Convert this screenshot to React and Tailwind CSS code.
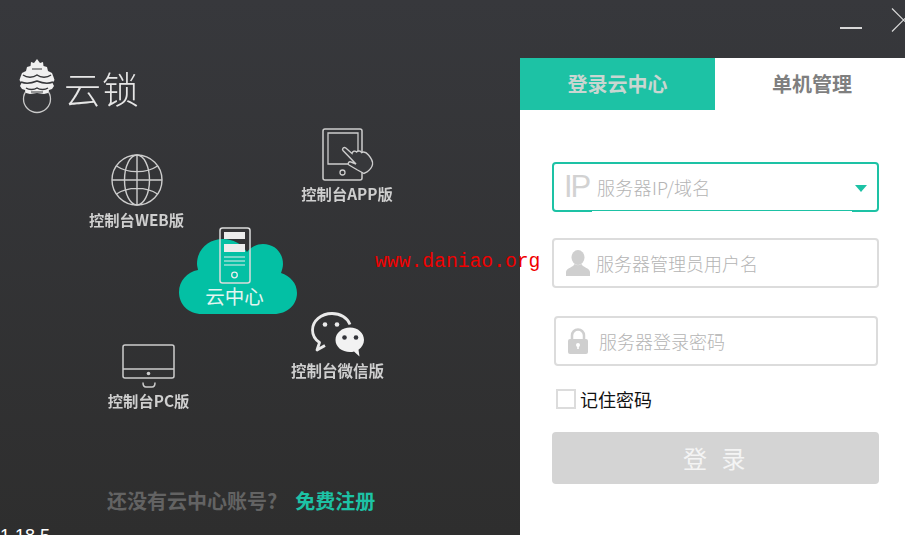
import React from "react";

// Libellé sous chaque icône du canevas
function Node({ className, label, labelClass, children }) {
  return (
    <div className={`absolute flex flex-col items-center ${className}`}>
      {children}
      <span className={`whitespace-nowrap font-bold text-[#cfcfcf] blur-[0.3px] ${labelClass}`}>{label}</span>
    </div>
  );
}

function Mascot() {
  return (
    <svg width="36" height="56" viewBox="0 0 36 56" className="shrink-0">
      <circle cx="18" cy="40" r="13.500" fill="none" stroke="#c9c9c9" strokeWidth="1.300" />
      <polygon
        points="18,0 21,4 24,3 24.500,7 28,8 29,12 33,14 34.500,18 35.500,21 33.500,24 35,27 33,30 30,31 29,34 25,35 18,34 11,35 7,34 6,31 3,30 1,27 2.500,24 0.500,21 1.500,18 3,14 7,12 8,8 11.500,7 12,3 15,4"
        fill="#f0f0f0"
      />
      <path d="M4 16c4 3 10 3 14 0 4 3 10 3 14 0M2 23c5 2 11 1 16-1 5 2 11 3 16 1M7 29c3 2 8 2 11 0 3 2 8 2 11 0" fill="none" stroke="#37383b" strokeWidth="1.500" />
      <path d="M13 10h10M12 33h12" fill="none" stroke="#37383b" strokeWidth="1.100" />
    </svg>
  );
}

function Globe() {
  return (
    <svg width="54" height="54" viewBox="0 0 54 54" fill="none" stroke="#cdcdcd" strokeWidth="1.400" className="blur-[0.2px]">
      <circle cx="27" cy="27" r="25" />
      <ellipse cx="27" cy="27" rx="12.500" ry="25" />
      <path d="M27 2v50M2 27h50M6.500 13c11 7.500 30 7.500 41 0M6.500 41c11-7.500 30-7.500 41 0" />
    </svg>
  );
}

function Tablet() {
  return (
    <svg width="54" height="54" viewBox="0 0 54 54" fill="none" stroke="#cdcdcd" className="blur-[0.2px]">
      <path d="M40 41v9a2 2 0 0 1-2 2H3a2 2 0 0 1-2-2V3a2 2 0 0 1 2-2h35a2 2 0 0 1 2 2v22" strokeWidth="1.500" />
      <path d="M27 36H6V5h30v18" strokeWidth="1.300" />
      <circle cx="20.500" cy="44.500" r="2.500" strokeWidth="1.300" />
      <path
        d="M21 22.500c-1.500-2 1-4 2.800-2.500l6.200 5.500c.5-2.500 3-3 4.500-1.500 1.500-1.500 4-1.500 5 .5 2-1 5 0 7 2.500 3 3.500 4.500 7 4 9.500-.5 3-3 5.500-5.500 7.500l-3 1.500-6.500-3.500-8.500-5c-2-1.500 0-4 2-3l5 2z"
        fill="#37383b"
        strokeWidth="1.400"
      />
    </svg>
  );
}

function Monitor() {
  return (
    <svg width="54" height="46" viewBox="0 0 54 46" fill="none" stroke="#cdcdcd" strokeWidth="1.500" className="blur-[0.2px]">
      <rect x="1" y="1" width="51" height="33" rx="2" />
      <path d="M1 25h51M21 38.500c0 3 1 4.500 3 4.500h6c2 0 3-1.500 3-4.500" />
      <circle cx="26.500" cy="29.500" r="1.800" fill="#cdcdcd" stroke="none" />
    </svg>
  );
}

function Wechat() {
  return (
    <svg width="54" height="46" viewBox="0 0 54 46" className="blur-[0.2px]">
      <path
        d="M21 1.500C10 1.500 1.500 9 1.500 18c0 5 2.500 9.500 7 12.500L6 38l8-4.500"
        fill="none"
        stroke="#eaeaea"
        strokeWidth="2.800"
        strokeLinejoin="round"
      />
      <path d="M21 1.500c8.500 0 15.500 4.500 18 11" fill="none" stroke="#eaeaea" strokeWidth="2.800" />
      <circle cx="14" cy="12.500" r="2.300" fill="#eaeaea" />
      <circle cx="26" cy="12.500" r="2.300" fill="#eaeaea" />
      <path d="M39 15.500c-8 0-14.500 5.500-14.500 12.500S31 40 39 40c1.500 0 3-.2 4-.6l5.500 5-1-6.700c3.500-2.300 5.500-6 5.500-9.700 0-7-6-12.500-14-12.500z" fill="#f2f2f2" />
      <circle cx="33.500" cy="25.500" r="2.300" fill="#33343a" />
      <circle cx="45" cy="25.500" r="2.300" fill="#33343a" />
    </svg>
  );
}

function CloudCenter() {
  return (
    <div className="absolute left-[179px] top-[107px] h-[88px] w-[118px]">
      <svg width="118" height="76" viewBox="0 0 118 76" className="absolute left-0 top-[12px]">
        <path
          d="M23 75C9 75 0 65 0 53c0-11 8-20 19-22 0-1-1-4-1-6C18 10 30 0 44 0c10 0 19 5 24 13 4-5 10-8 16-8 12 0 20 9 20 20 0 3-1 6-2 9 9 3 16 10 16 20 0 12-10 21-23 21z"
          fill="#03c0a4"
        />
      </svg>
      <svg width="32" height="58" viewBox="0 0 32 58" fill="none" className="absolute left-[40px] top-0">
        <rect x="1" y="1" width="30" height="55" rx="2.500" stroke="#dcdcdc" strokeWidth="1.500" />
        <rect x="5" y="5" width="21" height="7" fill="#ececec" />
        <rect x="5" y="17" width="21" height="8" fill="#ececec" />
        <path d="M5 30h21M5 34h21M5 38h21" stroke="#ececec" strokeWidth="1.200" />
        <circle cx="15.500" cy="48" r="2.800" stroke="#ececec" strokeWidth="1.300" />
      </svg>
      <span className="absolute left-0 right-[7px] top-[56px] text-center text-[19.500px] leading-[26px] text-[#e4f5f1]">云中心</span>
    </div>
  );
}

function Field({ className = "", active, icon, text, textClass = "" }) {
  return (
    <div
      className={`relative flex h-[50px] items-center rounded-[4px] border-2 ${active ? "border-[#1dc2a5]" : "border-[#dcdcdc]"} ${className}`}
    >
      {icon}
      <span className={`text-[18px] font-light leading-6 text-[#b4b4b4] ${textClass}`}>{text}</span>
      {active && (
        <>
          <span className="absolute -bottom-[2px] left-[38px] h-px w-[260px] bg-white" />
          <span className="absolute right-[10px] top-[21px] h-0 w-0 border-x-[6px] border-t-[7px] border-x-transparent border-t-[#1dc2a5]" />
        </>
      )}
    </div>
  );
}

export default function App() {
  return (
    <div className="relative flex h-[535px] w-[905px] flex-col overflow-hidden bg-gradient-to-b from-[#37383c] to-[#2e2e2e] [font-family:'Noto_Sans_CJK_SC','Liberation_Sans',sans-serif]">
      <header className="flex h-[58px] shrink-0 justify-end">
        <div className="mr-[29px] mt-[27px] h-[2px] w-[22px] bg-[#d8d8d8]" />
        <svg width="24" height="24" viewBox="0 0 24 24" className="-mr-[10px] mt-[8px]" fill="none" stroke="#d8d8d8" strokeWidth="1.200">
          <path d="M1 0.500l23 23M1 23.500l23-23" />
        </svg>
      </header>

      <div className="flex min-h-0 flex-1">
        <div className="flex w-[520px] shrink-0 flex-col">
          <div className="flex h-[62px] shrink-0 items-start pl-[19px] pt-[1px]">
            <Mascot />
            <span className="ml-[9px] mt-[4px] text-[37px] font-extralight leading-[50px] tracking-[1px] text-[#e6e6e6] blur-[0.3px]">云锁</span>
          </div>

          {/* canevas : origine en y=120 */}
          <div className="relative h-[367px] shrink-0">
            <Node className="left-[89px] top-[33px] w-[95px]" label="控制台WEB版" labelClass="text-[15.300px] leading-[26px] -mt-[1px]">
              <Globe />
            </Node>
            <Node className="left-[301px] top-[8px] w-[92px]" label="控制台APP版" labelClass="text-[15.300px] leading-[26px] -mt-[2px]">
              <div className="ml-[3px]"><Tablet /></div>
            </Node>
            <CloudCenter />
            <Node className="left-[107px] top-[224px] w-[83px]" label="控制台PC版" labelClass="text-[15.300px] leading-[26px] -mt-[3px]">
              <Monitor />
            </Node>
            <Node className="left-[291px] top-[192px] w-[93px]" label="控制台微信版" labelClass="text-[15.500px] leading-[26px] -mt-[1px]">
              <Wechat />
            </Node>
          </div>

          <div className="flex shrink-0 items-center pl-[107px] text-[20px] font-bold leading-[28px]">
            <span className="text-[#636363]">还没有云中心账号?</span>
            <span className="ml-[18px] text-[#1dc2a5]">免费注册</span>
          </div>
          <span className="mt-[11px] shrink-0 whitespace-nowrap text-[18px] leading-[20px] text-white [font-family:'Liberation_Sans',sans-serif]">1.18.5</span>
        </div>

        <div className="flex min-w-0 flex-1 flex-col bg-white">
          <div className="flex h-[52px] shrink-0 text-[20px] font-bold">
            <div className="flex w-[195px] items-center justify-center bg-[#1dc2a5] text-[#c9d6d1]">登录云中心</div>
            <div className="flex flex-1 items-center justify-center pl-[4px] text-[#7f7f7f]">单机管理</div>
          </div>

          <div className="flex flex-col pl-[32px] pt-[52px]">
            <Field
              className="w-[327px]"
              active
              icon={<span className="ml-[10px] w-[33px] text-[31px] font-normal leading-[40px] tracking-[-2px] text-[#d2d2d2] [font-family:'Liberation_Sans',sans-serif]">IP</span>}
              text="服务器IP/域名"
              textClass="tracking-[0.3px]"
            />
            <Field
              className="mt-[26px] w-[327px]"
              icon={
                <svg width="24" height="26" viewBox="0 0 24 26" className="ml-[12px] mr-[6px]" fill="#cfcfcf">
                  <ellipse cx="12" cy="7.500" rx="6.500" ry="7.500" />
                  <path d="M8.500 14c-.5 3-8.500 4-8.500 8v4h24v-4c0-4-8-5-8.500-8-2 1.500-5 1.500-7 0z" />
                </svg>
              }
              text="服务器管理员用户名"
            />
            <Field
              className="ml-[2px] mt-[28px] w-[324px]"
              icon={
                <svg width="20" height="26" viewBox="0 0 20 26" className="ml-[12px] mr-[11px]">
                  <path d="M4 12V7.500a6 6 0 0 1 12 0V12" fill="none" stroke="#cfcfcf" strokeWidth="2.500" />
                  <rect y="11" width="20" height="15" rx="2" fill="#cfcfcf" />
                  <circle cx="10" cy="17" r="2" fill="#fff" />
                  <rect x="9.200" y="17" width="1.600" height="4" fill="#fff" />
                </svg>
              }
              text="服务器登录密码"
            />
            <label className="mt-[23px] flex h-[20px] items-center pl-[4px]">
              <span className="h-[20px] w-[20px] border-2 border-[#dcdcdc]" />
              <span className="ml-[4px] text-[18px] leading-6 text-[#111]">记住密码</span>
            </label>
            <button className="mt-[23px] h-[52px] w-[327px] rounded-[4px] bg-[#d4d4d4] pl-[12px] text-[24px] tracking-[0.6em] text-[#f4f4f4]">登录</button>
          </div>
        </div>
      </div>

      {/* filigrane */}
      <span className="absolute left-[375px] top-[250px] text-[19.700px] leading-[24px] text-[#f00000] [font-family:'Liberation_Mono',monospace]">www.daniao.org</span>
    </div>
  );
}
